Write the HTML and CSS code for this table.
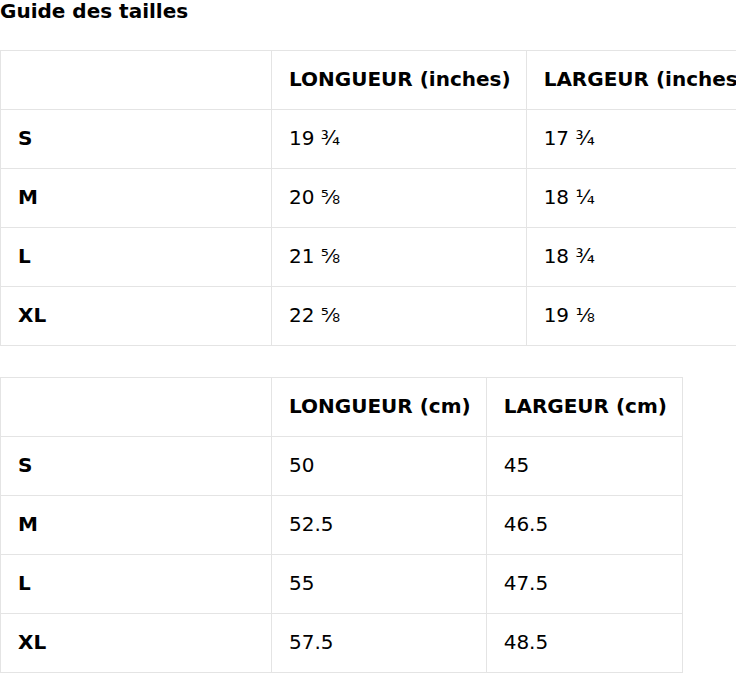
FILE: index.html
```html
<!DOCTYPE html>
<html lang="fr">
<head>
<meta charset="utf-8">
<title>Guide des tailles</title>
<link rel="stylesheet" href="styles.css">
</head>
<body>
<div class="guide">
<h2 class="title">Guide des tailles</h2>
<table class="size-table">
  <tr><th class="first"></th><th>LONGUEUR (inches)</th><th>LARGEUR (inches)</th></tr>
  <tr><th class="first">S</th><td>19 ¾</td><td>17 ¾</td></tr>
  <tr><th class="first">M</th><td>20 ⅝</td><td>18 ¼</td></tr>
  <tr><th class="first">L</th><td>21 ⅝</td><td>18 ¾</td></tr>
  <tr><th class="first">XL</th><td>22 ⅝</td><td>19 ⅛</td></tr>
</table>
<table class="size-table">
  <tr><th class="first"></th><th>LONGUEUR (cm)</th><th>LARGEUR (cm)</th></tr>
  <tr><th class="first">S</th><td>50</td><td>45</td></tr>
  <tr><th class="first">M</th><td>52.5</td><td>46.5</td></tr>
  <tr><th class="first">L</th><td>55</td><td>47.5</td></tr>
  <tr><th class="first">XL</th><td>57.5</td><td>48.5</td></tr>
</table>
</div>
</body>
</html>
```
FILE: styles.css
```css
html, body {
  margin: 0;
  padding: 0;
  background: #fff;
}
body {
  font-family: "DejaVu Sans", sans-serif;
  font-size: 20px;
  color: #000;
  overflow: hidden;
}
.guide {
  width: max-content;
}
.title {
  font-size: 20px;
  font-weight: bold;
  line-height: 22px;
  margin: 0 0 28px;
  white-space: nowrap;
}
.size-table {
  border-collapse: collapse;
  margin: 0 0 31px;
  white-space: nowrap;
}
.size-table th,
.size-table td {
  border: 1px solid #e4e4e4;
  padding: 17px 15px 18px 17px;
  line-height: 23px;
  text-align: left;
  vertical-align: middle;
}
.size-table th {
  font-weight: bold;
}
.size-table td {
  font-weight: normal;
}
.size-table .first {
  width: 238px;
}
```
